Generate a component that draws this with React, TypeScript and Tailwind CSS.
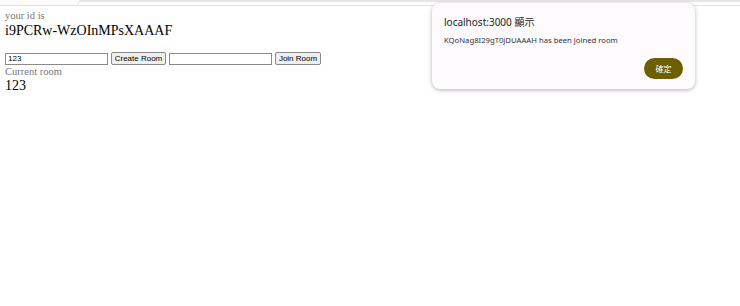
export default function App() {
  return (
    <div className="relative w-[740px] h-[306px] bg-white overflow-hidden">
      <div className="flex h-[6px] border-b border-[#e4e4e4]">
        <div className="w-[78px] bg-[#fbfbfb]" />
        <div className="flex-1 border-t-[2px] border-l border-[#e6e6e6] rounded-tl-[3px] bg-white" />
      </div>

      <div className="px-[5px] pt-[4px] font-['Liberation_Serif',serif]">
        <div className="text-[10.5px] leading-[12px] text-[#777]">your id is</div>
        <div className="text-[14px] leading-[18px] text-black">i9PCRw-WzOInMPsXAAAF</div>

        <div className="mt-[12px] flex items-center gap-[3px] font-['Liberation_Sans',sans-serif] text-[8px]">
          <input
            defaultValue="123"
            className="w-[103px] min-w-0 h-[12px] border border-[#8a8a8a] px-[2px] text-[8px] leading-[10px] text-black outline-none"
          />
          <button className="w-[55px] shrink-0 h-[13px] border border-[#8a8a8a] bg-[#efefef] rounded-[2px] text-[8px] leading-[11px] text-black">
            Create Room
          </button>
          <input className="w-[103px] min-w-0 h-[12px] border border-[#8a8a8a] px-[2px] text-[8px] outline-none" />
          <button className="w-[46px] shrink-0 h-[13px] border border-[#8a8a8a] bg-[#efefef] rounded-[2px] text-[8px] leading-[11px] text-black">
            Join Room
          </button>
        </div>

        <div className="text-[10.5px] leading-[13px] text-[#777]">Current room</div>
        <div className="text-[14px] leading-[16px] text-black">123</div>
      </div>

      <div className="absolute left-[432px] top-[3px] w-[263px] h-[86px] rounded-[8px] bg-[#fdfbfd] shadow-[0_1px_4px_rgba(0,0,0,0.3)] px-[12px] pt-[13px] font-['Noto_Sans','Noto_Sans_CJK_TC',sans-serif]">
        <div className="text-[10px] leading-[13px] text-[#222]">localhost:3000 顯示</div>
        <div className="mt-[6px] text-[7.7px] leading-[11px] text-[#333]">KQoNag8I29gT0jDUAAAH has been joined room</div>
        <div className="mt-[12px] flex justify-end">
          <button className="w-[39px] h-[21px] rounded-full bg-[#6b5f00] text-white text-[8px] font-['Noto_Sans_CJK_TC',sans-serif]">
            確定
          </button>
        </div>
      </div>
    </div>
  );
}
